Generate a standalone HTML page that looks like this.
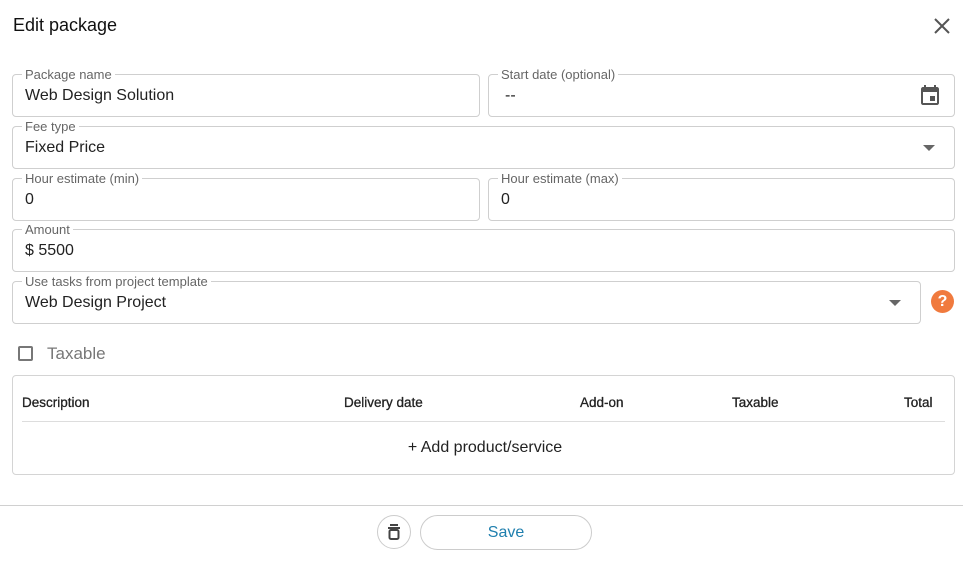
<!DOCTYPE html>
<html><head><style>
*{box-sizing:border-box;margin:0;padding:0}
body{width:963px;height:564px;background:#fff;font-family:"Liberation Sans",sans-serif;position:relative;overflow:hidden;color:#222}
.a{position:absolute}
.f{position:absolute;border:1px solid #cfcfcf;border-radius:4px;height:43px}
.l{position:absolute;top:-8px;left:9px;background:#fff;padding:0 3px;font-size:13px;color:#666;line-height:16px}
.v{position:absolute;left:12px;top:12px;font-size:16px;color:#222;line-height:18px}
.dd{position:absolute;right:19px;top:18px;width:0;height:0;border-left:6px solid transparent;border-right:6px solid transparent;border-top:6px solid #666}
.h{position:absolute;top:395px;font-size:13.5px;color:#222;-webkit-text-stroke:0.3px #222}
</style></head><body>
<div class="a" style="left:13px;top:15px;font-size:18px;color:#111">Edit package</div>
<svg class="a" style="left:933px;top:17px" width="18" height="18" viewBox="0 0 18 18"><path d="M2 2L16 16M16 2L2 16" stroke="#555" stroke-width="2"/></svg>

<div class="f" style="left:12px;top:74px;width:468px"><span class="l">Package name</span><span class="v">Web Design Solution</span></div>
<div class="f" style="left:488px;top:74px;width:467px"><span class="l">Start date (optional)</span><span class="v" style="left:16px">--</span>
<svg class="a" style="left:429px;top:8px" width="24" height="24" viewBox="0 0 24 24"><path fill="#555" d="M19 4h-1V2h-2v2H8V2H6v2H5c-1.1 0-2 .9-2 2v14c0 1.1.9 2 2 2h14c1.1 0 2-.9 2-2V6c0-1.1-.9-2-2-2zm0 16H5V9h14v11zm-7-7h5v5h-5z"/></svg></div>
<div class="f" style="left:12px;top:126px;width:943px"><span class="l">Fee type</span><span class="v">Fixed Price</span><span class="dd"></span></div>
<div class="f" style="left:12px;top:178px;width:468px"><span class="l">Hour estimate (min)</span><span class="v">0</span></div>
<div class="f" style="left:488px;top:178px;width:467px"><span class="l">Hour estimate (max)</span><span class="v">0</span></div>
<div class="f" style="left:12px;top:229px;width:943px"><span class="l">Amount</span><span class="v">$ 5500</span></div>
<div class="f" style="left:12px;top:281px;width:909px"><span class="l">Use tasks from project template</span><span class="v">Web Design Project</span><span class="dd"></span></div>
<div class="a" style="left:931px;top:290px;width:23px;height:23px;border-radius:50%;background:#f07a3e;color:#fff;font-weight:bold;font-size:16px;text-align:center;line-height:23px">?</div>

<div class="a" style="left:18px;top:346px;width:15px;height:15px;border:2px solid #777;border-radius:2px"></div>
<div class="a" style="left:47px;top:344px;font-size:17px;color:#777">Taxable</div>

<div class="a" style="left:12px;top:375px;width:943px;height:100px;border:1px solid #d4d4d4;border-radius:4px"></div>
<div class="h" style="left:22px">Description</div>
<div class="h" style="left:344px">Delivery date</div>
<div class="h" style="left:580px">Add-on</div>
<div class="h" style="left:732px">Taxable</div>
<div class="h" style="left:904px">Total</div>
<div class="a" style="left:22px;top:421px;width:923px;height:1px;background:#ddd"></div>
<div class="a" style="left:0;width:970px;top:439px;text-align:center;font-size:16px;color:#222">+ Add product/service</div>

<div class="a" style="left:0;top:505px;width:963px;height:1px;background:#d0d0d0"></div>
<div class="a" style="left:377px;top:515px;width:34px;height:34px;border:1px solid #ccc;border-radius:50%"></div>
<svg class="a" style="left:386px;top:523px" width="16" height="18" viewBox="0 0 16 18"><path d="M4 2h8M2 5h12" stroke="#444" stroke-width="2"/><rect x="3.5" y="7" width="9" height="9" rx="1.5" fill="none" stroke="#444" stroke-width="2"/></svg>
<div class="a" style="left:420px;top:515px;width:172px;height:35px;border:1px solid #ccc;border-radius:18px;text-align:center;line-height:33px;font-size:16px;color:#1f7fae">Save</div>
</body></html>
